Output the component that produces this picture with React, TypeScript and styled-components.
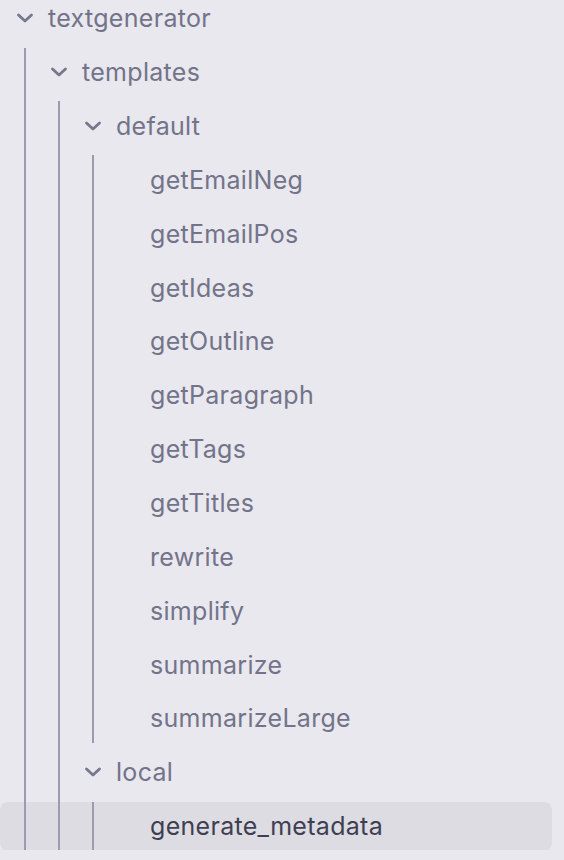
import React from 'react';
import styled, {createGlobalStyle} from 'styled-components';

const GlobalStyle = createGlobalStyle`
  html, body {
    margin: 0;
    padding: 0;
    background: #e8e8ee;
    font-family: Inter, "Noto Sans", "Liberation Sans", sans-serif;
  }
`

const ROW_GAP = 4.87;
const INDENT = 34;

type Node = {
    name: string;
    children?: Node[];
    active?: boolean;
}

const tree: Node = {
    name: 'textgenerator',
    children: [
        {
            name: 'templates',
            children: [
                {
                    name: 'default',
                    children: [
                        'getEmailNeg', 'getEmailPos', 'getIdeas', 'getOutline', 'getParagraph',
                        'getTags', 'getTitles', 'rewrite', 'simplify', 'summarize', 'summarizeLarge'
                    ].map(name => ({name}))
                },
                {
                    name: 'local',
                    children: [{name: 'generate_metadata', active: true}]
                }
            ]
        }
    ]
};

const Viewport = styled.div`
  height: 850px;
  overflow: hidden;
  padding-right: 12px;
`

const Tree = styled.div`
  display: flex;
  flex-direction: column;
  margin-top: -6.3px;
`

const Item = styled.div`
  display: flex;
  flex-direction: column;
`

const Row = styled.div<{ $depth: number; $file?: boolean; $active?: boolean }>`
  display: flex;
  align-items: center;
  height: 49px;
  margin-bottom: ${ROW_GAP}px;
  padding-left: ${p => 16 + p.$depth * INDENT + (p.$file ? 32 : 0)}px;
  border-radius: 8px;
  box-sizing: border-box;
  background: ${p => p.$active ? '#dcdce2' : 'transparent'};
  color: ${p => p.$active ? '#3f3f52' : '#737389'};
  font-size: 25px;
  letter-spacing: 0.3px;
  white-space: nowrap;
  cursor: pointer;
`

const Chevron = styled.svg`
  width: 18px;
  height: 10px;
  margin-right: 14px;
  flex-shrink: 0;
  color: #77778d;
`

// indent guide drawn over the rows, so it stays visible on the selected one
const Children = styled.div<{ $depth: number }>`
  position: relative;
  display: flex;
  flex-direction: column;

  &::before {
    content: '';
    position: absolute;
    z-index: 1;
    top: 0;
    bottom: ${ROW_GAP}px;
    left: ${p => 24 + p.$depth * INDENT}px;
    width: 2px;
    background: #9a9bae;
  }
`

const TreeItem = ({node, depth}: { node: Node, depth: number }) => {
    if (!node.children) {
        return <Row $depth={depth} $file $active={node.active}>{node.name}</Row>;
    }
    return (
        <Item>
            <Row $depth={depth}>
                <Chevron viewBox="0 0 18 10" fill="none" stroke="currentColor">
                    <path d="M2.5 2 L9 8 L15.5 2" strokeWidth={2.8} strokeLinecap="round" strokeLinejoin="round"/>
                </Chevron>
                {node.name}
            </Row>
            <Children $depth={depth}>
                {node.children.map(child => <TreeItem key={child.name} node={child} depth={depth + 1}/>)}
            </Children>
        </Item>
    );
}

const App = () => {
    return (
        <>
            <GlobalStyle/>
            <Viewport>
                <Tree>
                    <TreeItem node={tree} depth={0}/>
                </Tree>
            </Viewport>
        </>
    );
}

export default App;
